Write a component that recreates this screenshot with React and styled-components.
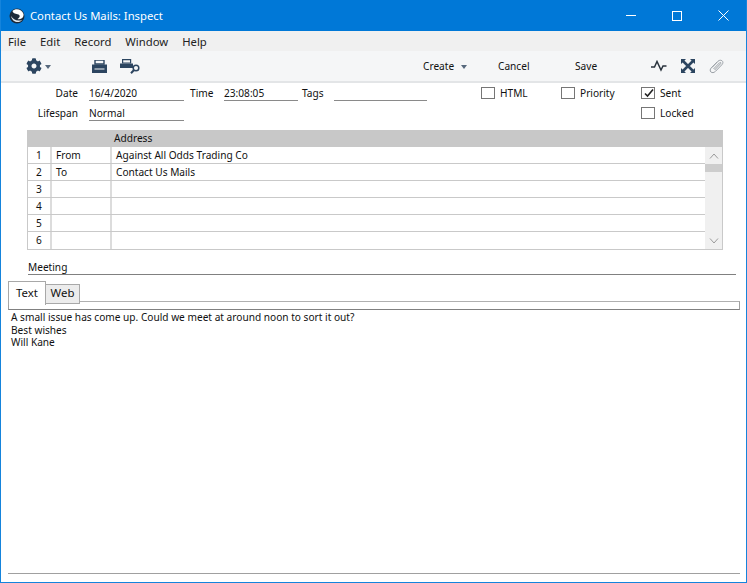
import React from "react";
import styled, { createGlobalStyle } from "styled-components";
import { FaCog } from "react-icons/fa";

const Global = createGlobalStyle`
  html, body { margin: 0; padding: 0; background: #fff; }
  body { font-family: "Noto Sans", "Liberation Sans", sans-serif; font-size: 10.15px; color: #111; }
  * { box-sizing: border-box; }
`;

const Frame = styled.div`
  width: 747px; height: 583px; display: flex; flex-direction: column; overflow: hidden;
  background: #fff; border: 1px solid #1584dc; border-top: 0;
`;
const TitleBar = styled.div`
  height: 31px; margin: 0 -1px; background: #0078d7; color: #fff; display: flex; align-items: center;
  padding: 0 1px 0 9px; flex: none;
`;
const AppLogo = styled.svg`width: 16px; height: 16px; margin-right: 5px; flex: none;`;
const TitleText = styled.div`flex: 1; font-size: 11.25px;`;
const WinButton = styled.div`
  width: 46px; height: 31px; display: flex; align-items: center; justify-content: center;
  svg { display: block; }
`;
const MenuBar = styled.div`
  height: 20px; background: #f0f0f0; display: flex; align-items: center; padding-left: 7px; gap: 14px;
  font-size: 11.3px; flex: none;
`;
const MenuItem = styled.span`color: #222;`;
const Toolbar = styled.div`
  height: 32px; background: #f5f6f7; border-bottom: 2px solid #e3e5e7; display: flex; align-items: center;
  flex: none; padding-left: 25px;
`;
const ToolIcon = styled.span`
  display: flex; align-items: center; justify-content: center; color: #2c4560;
  width: ${p => p.$w}px; margin-left: ${p => p.$ml || 0}px; flex: none;
`;
const ToolCaret = styled.span`
  width: 0; height: 0; border-left: 3.5px solid transparent; border-right: 3.5px solid transparent;
  border-top: 4px solid #56687c; margin-left: ${p => p.$ml || 0}px; margin-top: 1px; flex: none;
`;
const ToolText = styled.span`
  width: ${p => p.$w}px; margin-left: ${p => p.$ml}px; flex: none; color: #111; white-space: nowrap;
`;
const Form = styled.div`flex: 1; display: flex; flex-direction: column; min-height: 0;`;
const FieldRow = styled.div`
  height: 20px; display: flex; align-items: center; flex: none;
`;
const FieldStack = styled.div`display: flex; flex-direction: column; flex: none;`;
const Label = styled.span`
  width: ${p => p.$w}px; text-align: ${p => p.$left ? "left" : "right"}; margin-left: ${p => p.$ml || 0}px;
  flex: none; color: #111; line-height: 14px;
`;
const Field = styled.span`
  width: ${p => p.$w}px; margin-left: ${p => p.$ml}px; height: 16px; line-height: 14px; flex: none;
  border-bottom: 1px solid #8a8a8a; padding-top: 1px; color: #111;
`;
const Box = styled.span`
  width: 14px; height: 12px; border: 1px solid #767676; background: #fff; flex: none; margin-left: ${p => p.$ml}px;
  margin-right: 5px; position: relative; display: block;
  svg { position: absolute; left: 1px; top: 0; }
`;
const Grid = styled.div`
  margin: 7px 23px 0 26px; height: 120px; flex: none; display: flex; flex-direction: column;
  border-right: 1px solid #c9c9c9; border-bottom: 1px solid #c9c9c9; border-left: 1px solid #c9c9c9;
`;
const GridHead = styled.div`
  height: 17px; background: #c8c8c8; margin: 0 -1px; padding-left: 87px; line-height: 16px; flex: none; color: #111;
`;
const GridBody = styled.div`flex: 1; display: flex; min-height: 0;`;
const Rows = styled.div`flex: 1; display: flex; flex-direction: column;`;
const Row = styled.div`
  height: 17px; flex: none; display: flex; border-bottom: ${p => p.$last ? 0 : "1px solid #c9c9c9"};
`;
const Cell = styled.div`
  width: ${p => p.$w}px; flex: ${p => p.$w ? "none" : 1}; border-right: ${p => p.$w ? "2px solid #dcdcdc" : 0};
  padding-left: ${p => p.$center ? 0 : 4}px; text-align: ${p => p.$center ? "center" : "left"}; line-height: 16px; color: #111;
`;
const Scroll = styled.div`
  width: 17px; flex: none; background: #f0f0f0; display: flex; flex-direction: column; align-items: center;
`;
const ScrollBtn = styled.div`height: 17px; width: 100%; flex: none; display: flex; align-items: center; justify-content: center;`;
const Thumb = styled.div`height: 8px; width: 100%; background: #cdcdcd; flex: none;`;
const Spacer = styled.div`flex: 1;`;
const Section = styled.div`
  margin: 9px 10px 0 27px; height: 16px; border-bottom: 1px solid #808080; line-height: 14px; flex: none; color: #111;
  padding-top: 1px;
`;
const TabStrip = styled.div`
  height: 29px; margin: 6px 6px 0 7px; position: relative; display: flex; align-items: flex-start; flex: none;
  &::after {
    content: ""; position: absolute; left: 0; right: 0; bottom: 0; height: 7px;
    border: 1px solid #a0a0a0; border-bottom-color: #808080; border-top-color: #b0b0b0;
  }
`;
const Tab = styled.div`
  height: ${p => p.$on ? 24 : 20}px; margin-top: ${p => p.$on ? 0 : 3}px; width: ${p => p.$w}px; text-align: center;
  background: ${p => p.$on ? "#fff" : "#ececec"}; border: 1px solid #a8a8a8; border-bottom: ${p => p.$on ? 0 : "1px solid #a8a8a8"};
  position: relative; z-index: 1; font-size: 11.4px; line-height: ${p => p.$on ? 21 : 16}px; color: #111;
  margin-left: ${p => p.$on ? 0 : -1}px;
`;
const Body = styled.div`
  flex: 1; margin: 1px 6px 8px 7px; padding: 0 0 0 3px; border-bottom: 1px solid #a0a0a0; line-height: 12.5px; color: #111;
`;
const BodyLine = styled.div``;

const Logo = () => (
  <AppLogo viewBox="0 0 16 16">
    <circle cx="8" cy="8" r="7.5" fill="#1c2a3a" />
    <path d="M3.5 3 C6 0 13 0.5 14.5 6 C15 9.5 12 12 8.5 11 C11 9.5 11.5 7.5 9.5 6.5 C7 5.5 4.5 6 3.5 3Z" fill="#fff" />
    <path d="M2 8 C4 11.5 8 13.5 13 12 C10.5 15.5 3.5 15 2 8Z" fill="#dfe7ee" />
  </AppLogo>
);
const Printer = () => (
  <svg width="15" height="13" viewBox="0 0 15 13">
    <path d="M3 0h9v4H3z" fill="none" stroke="#2c4560" strokeWidth="1.4" />
    <path d="M0 4.5h15v5h-2.5v-1h-10v1H0z M0 9.5h15V13H0z" fill="#2c4560" />
  </svg>
);
const PrintSearch = () => (
  <svg width="20" height="15" viewBox="0 0 20 15">
    <path d="M2.6 .6h8v3.4h-8z" fill="none" stroke="#2c4560" strokeWidth="1.2" />
    <path d="M0 4.5h13V9H0z" fill="#2c4560" />
    <circle cx="16" cy="9" r="2.8" fill="none" stroke="#2c4560" strokeWidth="1.5" />
    <path d="M14 11 L11 14.2" stroke="#2c4560" strokeWidth="2" />
  </svg>
);
const Pulse = () => (
  <svg width="16" height="12" viewBox="0 0 16 12">
    <path d="M0 7 L3.5 7 L6 1.5 L10 10 L12 6 L15.5 6" fill="none" stroke="#28323c" strokeWidth="1.5" />
  </svg>
);
const Expand = () => (
  <svg width="14" height="14" viewBox="0 0 14 14" fill="#2c4560">
    <path d="M0 0h5L0 5z M14 0v5L9 0z M0 14V9l5 5z M14 14H9l5-5z" />
    <path d="M2 2 L12 12 M12 2 L2 12" stroke="#2c4560" strokeWidth="2.6" />
  </svg>
);
const Clip = () => (
  <svg width="15" height="15" viewBox="0 0 15 15" fill="none" stroke="#9aa0a6" strokeWidth="1">
    <path d="M3 8.5 L9 2.2 C10.5 0.8 13 1 13.6 2.4 C14.3 3.8 13.6 5 12.6 6 L6.4 12.4 C5 13.8 3 14 1.9 13 C0.8 11.8 1 10.2 2.2 9 L8.2 3" />
    <path d="M4.5 10 L10.5 3.8 C11.3 3 12.3 3.6 11.7 4.6 L5.6 11" />
  </svg>
);
const Chevron = ({ up }) => (
  <svg width="10" height="6" viewBox="0 0 10 6">
    <path d={up ? "M1 5.5 L5 1 L9 5.5" : "M1 .5 L5 5 L9 .5"} fill="none" stroke="#9a9a9a" strokeWidth="1" />
  </svg>
);

const rows = [["1", "From", "Against All Odds Trading Co"], ["2", "To", "Contact Us Mails"], ["3", "", ""], ["4", "", ""], ["5", "", ""], ["6", "", ""]];

export default function App() {
  return (
    <>
      <Global />
      <Frame>
        <TitleBar>
          <Logo />
          <TitleText>Contact Us Mails: Inspect</TitleText>
          <WinButton><svg width="10" height="1"><rect width="10" height="1" fill="#fff" /></svg></WinButton>
          <WinButton><svg width="10" height="10"><rect x=".5" y=".5" width="9" height="9" fill="none" stroke="#fff" /></svg></WinButton>
          <WinButton><svg width="11" height="11"><path d="M.5 .5 L10.5 10.5 M10.5 .5 L.5 10.5" stroke="#fff" /></svg></WinButton>
        </TitleBar>
        <MenuBar>
          {["File", "Edit", "Record", "Window", "Help"].map(m => <MenuItem key={m}>{m}</MenuItem>)}
        </MenuBar>
        <Toolbar>
          <ToolIcon $w={16}><FaCog size={16} /></ToolIcon>
          <ToolCaret $ml={3} />
          <ToolIcon $w={15} $ml={41}><Printer /></ToolIcon>
          <ToolIcon $w={20} $ml={13}><PrintSearch /></ToolIcon>
          <ToolText $w={31} $ml={283}>Create</ToolText>
          <ToolCaret $ml={7} />
          <ToolText $w={31} $ml={31}>Cancel</ToolText>
          <ToolText $w={23} $ml={46}>Save</ToolText>
          <ToolIcon $w={16} $ml={53}><Pulse /></ToolIcon>
          <ToolIcon $w={14} $ml={14}><Expand /></ToolIcon>
          <ToolIcon $w={15} $ml={14}><Clip /></ToolIcon>
        </Toolbar>
        <Form>
          <FieldStack>
            <FieldRow>
              <Label $w={77}>Date</Label>
              <Field $w={95} $ml={11}>16/4/2020</Field>
              <Label $w={30} $ml={6} $left>Time</Label>
              <Field $w={74} $ml={4}>23:08:05</Field>
              <Label $w={24} $ml={4} $left>Tags</Label>
              <Field $w={93} $ml={8} />
              <Box $ml={54} />
              <Label $w={56} $left>HTML</Label>
              <Box $ml={5} />
              <Label $w={56} $left>Priority</Label>
              <Box $ml={5}>
                <svg width="12" height="10" viewBox="0 0 12 10"><path d="M2 5.5 L4.5 8 L10 1.5" fill="none" stroke="#222" strokeWidth="1.6" /></svg>
              </Box>
              <Label $w={40} $left>Sent</Label>
            </FieldRow>
            <FieldRow>
              <Label $w={77}>Lifespan</Label>
              <Field $w={95} $ml={11}>Normal</Field>
              <Spacer />
              <Box $ml={0} />
              <Label $w={86} $left>Locked</Label>
            </FieldRow>
          </FieldStack>
          <Grid>
            <GridHead>Address</GridHead>
            <GridBody>
              <Rows>
                {rows.map((r, i) => (
                  <Row key={r[0]} $last={i === 5}>
                    <Cell $w={24} $center>{r[0]}</Cell>
                    <Cell $w={60}>{r[1]}</Cell>
                    <Cell>{r[2]}</Cell>
                  </Row>
                ))}
              </Rows>
              <Scroll>
                <ScrollBtn><Chevron up /></ScrollBtn>
                <Thumb />
                <Spacer />
                <ScrollBtn><Chevron /></ScrollBtn>
              </Scroll>
            </GridBody>
          </Grid>
          <Section>Meeting</Section>
          <TabStrip>
            <Tab $on $w={38}>Text</Tab>
            <Tab $w={35}>Web</Tab>
          </TabStrip>
          <Body>
            <BodyLine>A small issue has come up. Could we meet at around noon to sort it out?</BodyLine>
            <BodyLine>Best wishes</BodyLine>
            <BodyLine>Will Kane</BodyLine>
          </Body>
        </Form>
      </Frame>
    </>
  );
}
